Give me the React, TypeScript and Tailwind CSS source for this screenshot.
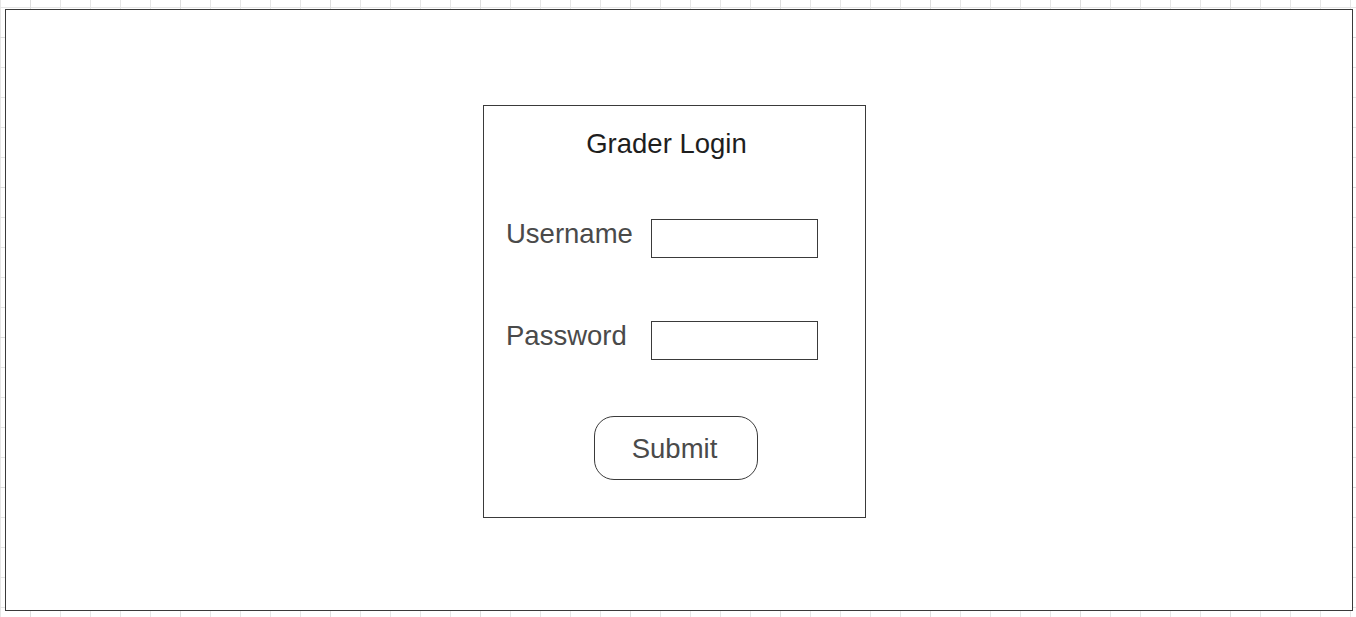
import React from 'react';

const App: React.FC = () => {
  return (
    <div
      className="w-full h-[617px] overflow-hidden pl-[5px] pt-[9px] font-['Liberation_Sans',Arial,sans-serif] bg-white bg-[linear-gradient(to_right,#dedede_1px,transparent_1px),linear-gradient(to_bottom,#dedede_1px,transparent_1px),linear-gradient(to_right,#e6e6e6_1px,transparent_1px),linear-gradient(to_bottom,#e6e6e6_1px,transparent_1px)] bg-[size:150px_150px,150px_150px,30px_30px,30px_30px] bg-[position:30px_0,0_37px,0_0,0_7px]"
    >
      <div className="w-[1348px] h-[602px] border border-[#3a3a3a] bg-white pl-[477px] pt-[95px]">
        {/* login card */}
        <div className="w-[383px] h-[413px] border border-[#3a3a3a] bg-white flex flex-col">
          <div className="mt-[22px] pr-4 text-center text-[27.5px] leading-[31px] text-[#1e1e1e]">
            Grader Login
          </div>

          <div className="mt-[59px] flex items-start pl-[22px]">
            <label className="w-[145px] text-[27.5px] leading-[31px] text-[#4a4a4a]">Username</label>
            <input
              type="text"
              className="mt-px h-[39px] w-[167px] border border-[#3a3a3a] bg-white outline-none"
            />
          </div>

          <div className="mt-[62px] flex items-start pl-[22px]">
            <label className="w-[145px] text-[27.5px] leading-[31px] text-[#4a4a4a]">Password</label>
            <input
              type="password"
              className="mt-px h-[39px] w-[167px] border border-[#3a3a3a] bg-white outline-none"
            />
          </div>

          <div className="mt-[56px] pl-[110px]">
            <button className="w-[164px] h-[64px] rounded-[20px] border border-[#3a3a3a] bg-white pr-[3px] text-[27.5px] leading-[31px] text-[#4a4a4a]">
              Submit
            </button>
          </div>
        </div>
      </div>
    </div>
  );
};

export default App;
